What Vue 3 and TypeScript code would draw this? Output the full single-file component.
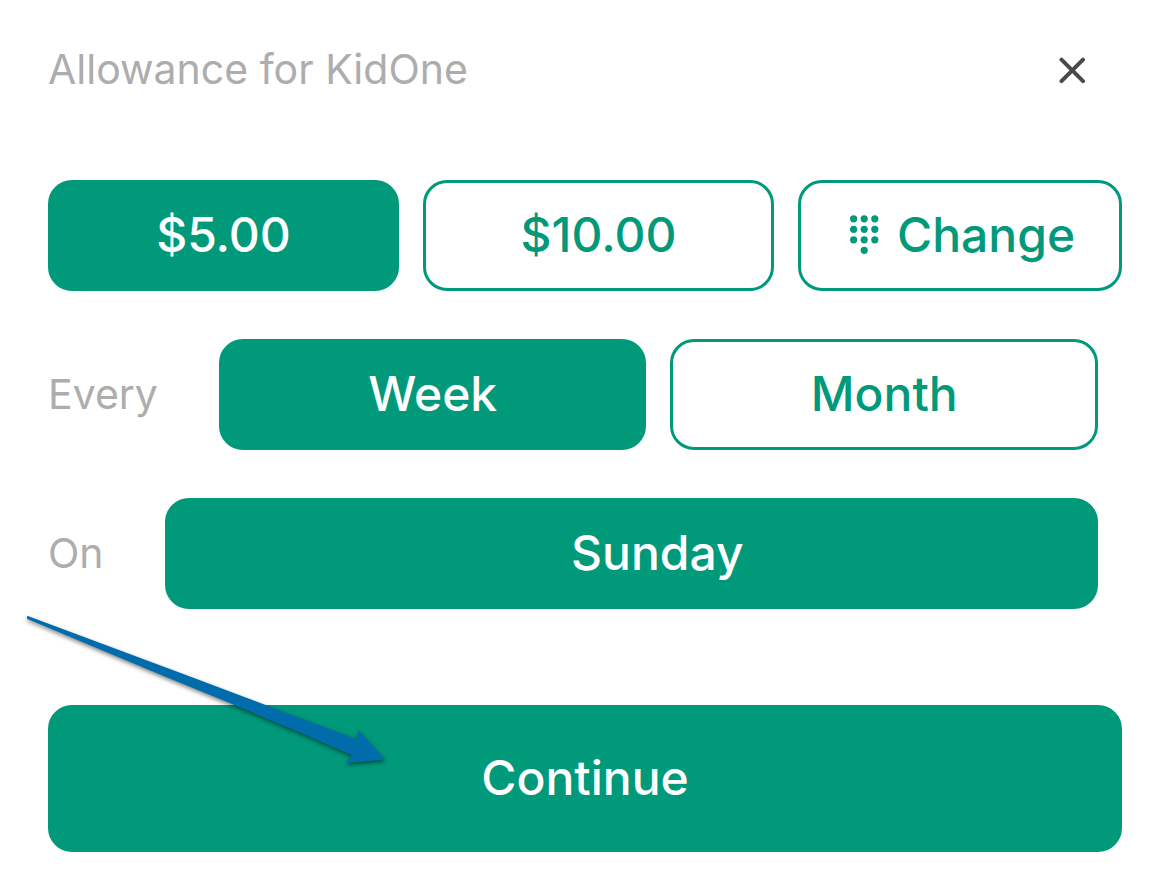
<script setup lang="ts">
import { ref } from 'vue'

const amounts = ['$5.00', '$10.00']
const periods = ['Week', 'Month']
const amount = ref('$5.00')
const period = ref('Week')

const dots = [
  [3.6, 3.8], [14.2, 3.8], [24.8, 3.8],
  [3.6, 14.3], [14.2, 14.3], [24.8, 14.3],
  [3.6, 24.8], [14.2, 24.8], [24.8, 24.8],
  [14.2, 35.3],
]
</script>

<template>
  <main class="sheet">
    <header class="header">
      <h1 class="title">Allowance for KidOne</h1>
      <button class="close" type="button" aria-label="Close">
        <svg width="28" height="28" viewBox="0 0 28 28" aria-hidden="true">
          <path d="M3.5 3.7 25 25.2M25 3.7 3.5 25.2" fill="none" stroke="#4a4a4a" stroke-width="4" stroke-linecap="round" />
        </svg>
      </button>
    </header>

    <div class="amounts" role="group" aria-label="Amount">
      <button
        v-for="a in amounts"
        :key="a"
        type="button"
        class="btn"
        :class="{ filled: amount === a }"
        :aria-pressed="amount === a"
        @click="amount = a"
      >{{ a }}</button>
      <button type="button" class="btn change">
        <svg width="29" height="39" viewBox="0 0 29 39" fill="currentColor" aria-hidden="true">
          <circle v-for="([x, y], i) in dots" :key="i" :cx="x" :cy="y" r="3.6" />
        </svg>
        <span>Change</span>
      </button>
    </div>

    <div class="row" role="group" aria-labelledby="every">
      <span id="every" class="label">Every</span>
      <button
        v-for="p in periods"
        :key="p"
        type="button"
        class="btn grow"
        :class="{ filled: period === p }"
        :aria-pressed="period === p"
        @click="period = p"
      >{{ p }}</button>
    </div>

    <div class="row">
      <span id="on" class="label">On</span>
      <button id="day" type="button" class="btn filled grow day" aria-labelledby="on day">Sunday</button>
    </div>

    <div class="footer">
      <button type="button" class="btn filled continue">Continue</button>
      <svg class="arrow" width="380" height="170" viewBox="0 0 380 170" aria-hidden="true">
        <path
          d="M7.8 16 170 76.5 337.5 139.5 338.7 130.3 365.3 159.6 326.2 163 331.8 155 280 132.5 217 106 140 74.5 73 46.5 7.8 19.2Q5.8 17 7.8 16Z"
          fill="#006cab"
        />
      </svg>
    </div>
  </main>
</template>

<style>
body {
  margin: 0;
  background: #fff;
}
</style>

<style scoped>
.sheet {
  display: flex;
  flex-direction: column;
  gap: 48px;
  padding: 36px 48px 19px;
  font-family: Inter, "Liberation Sans", sans-serif;
}

.header {
  display: flex;
  align-items: center;
  justify-content: space-between;
  height: 68px;
  padding-right: 28px;
  margin-bottom: 28px;
}

.title,
.label {
  margin: 0;
  padding-bottom: 2px;
  font-size: 41px;
  font-weight: 400;
  line-height: 52px;
  color: #adadad;
}

.close {
  display: flex;
  padding: 8px;
  border: 0;
  background: none;
  cursor: pointer;
}

.amounts {
  display: grid;
  grid-template-columns: 13fr 13fr 12fr;
  gap: 24px;
}

.btn {
  box-sizing: border-box;
  min-width: 0;
  height: 111px;
  padding: 0 0 2px;
  border: 3px solid #00997a;
  border-radius: 24px;
  background: #fff;
  color: #00997a;
  font-family: inherit;
  font-size: 48px;
  font-weight: 500;
  line-height: 60px;
  cursor: pointer;
}

.filled {
  background: #00997a;
  color: #fff;
}

.change {
  display: flex;
  align-items: center;
  justify-content: center;
  gap: 18px;
  padding-left: 5px;
}

.row {
  display: flex;
  align-items: center;
  gap: 24px;
  padding-right: 24px;
}

.label {
  margin-right: 37px;
}

.grow {
  flex: 1 1 0;
}

.day {
  padding-left: 52px;
}

.footer {
  position: relative;
  margin-top: 48px;
}

.continue {
  display: block;
  width: 100%;
  height: 147px;
}

.arrow {
  position: absolute;
  top: -105px;
  left: -28px;
  pointer-events: none;
  filter: drop-shadow(0 2px 2px rgba(0, 0, 0, 0.5));
}
</style>
